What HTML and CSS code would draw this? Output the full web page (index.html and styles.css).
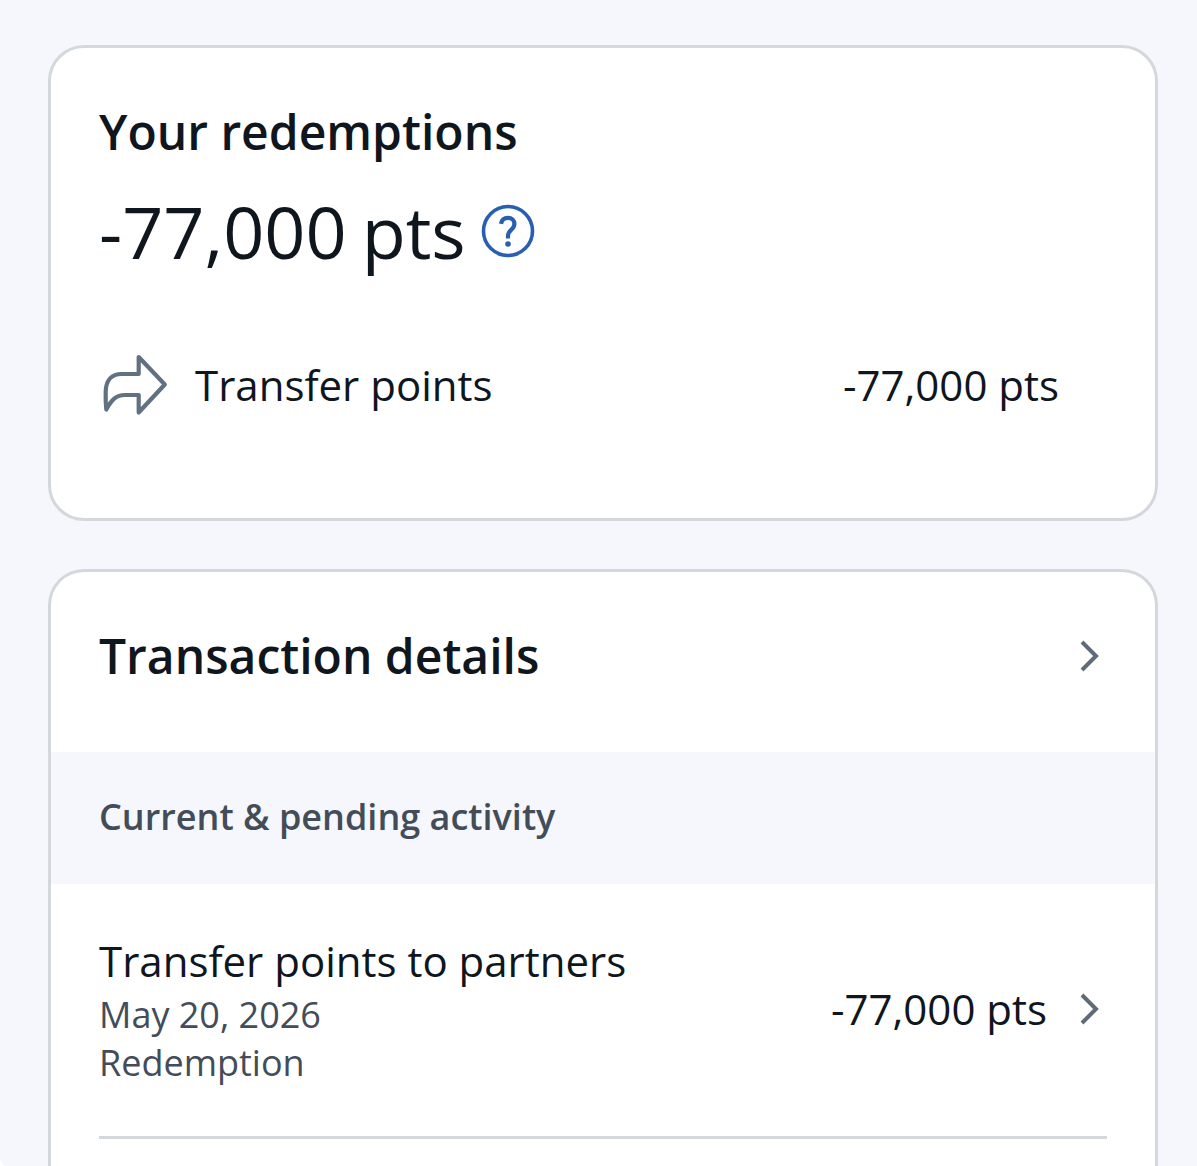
FILE: index.html
```html
<!DOCTYPE html>
<html lang="en">
<head>
<meta charset="utf-8">
<meta name="viewport" content="width=device-width, initial-scale=1">
<title>Your redemptions</title>
<link rel="stylesheet" href="styles.css">
</head>
<body>
<main class="page">
  <section class="card summary">
    <h2 class="card-title">Your redemptions</h2>
    <div class="total">
      <span class="total-value">-77,000</span>
      <span class="total-value">pts</span>
      <button class="help" type="button" aria-label="About your redemptions">
        <svg class="help-icon" viewBox="0 0 54 54" aria-hidden="true">
          <circle cx="27" cy="27" r="24.500" fill="none" stroke="currentColor" stroke-width="3.600"/>
          <path d="M20 19.800C20.600 16 23.300 13.800 27 13.800c3.800 0 6.400 2.600 6.400 6.200 0 5.600-6.400 5.800-6.400 11.800v2.600" fill="none" stroke="currentColor" stroke-width="4.200"/>
          <circle cx="27" cy="40" r="2.800" fill="currentColor"/>
        </svg>
      </button>
    </div>
    <div class="breakdown">
      <svg class="share-icon" viewBox="0 0 72 72" aria-hidden="true">
        <path d="M39.700 8 65.800 35.500 39.700 63.500V46H26C17 46 12.500 51 7.300 60.500 6.700 55 6.500 49 6.700 42.500 7 31 13 25 22.500 25h17.200z" fill="none" stroke="currentColor" stroke-width="4.200" stroke-linejoin="round"/>
      </svg>
      <span class="breakdown-label">Transfer points</span>
      <span class="amount">-77,000 pts</span>
    </div>
  </section>

  <section class="card details">
    <a class="details-header" href="#transactions">
      <h2 class="card-title">Transaction details</h2>
      <svg class="chevron" viewBox="0 0 36 36" aria-hidden="true"><path d="M11 4 25 18 11 32"/></svg>
    </a>
    <h3 class="group-title">Current &amp; pending activity</h3>
    <ul class="activity">
      <li class="activity-item">
        <a class="activity-link" href="#transfer">
          <span class="activity-text">
            <span class="activity-name">Transfer points to partners</span>
            <span class="activity-meta">May 20, 2026</span>
            <span class="activity-meta">Redemption</span>
          </span>
          <span class="amount">-77,000 pts</span>
          <svg class="chevron" viewBox="0 0 36 36" aria-hidden="true"><path d="M11 4 25 18 11 32"/></svg>
        </a>
      </li>
    </ul>
  </section>
</main>
</body>
</html>
```
FILE: styles.css
```css
* {
  box-sizing: border-box;
}

html {
  background: #fff;
}

body {
  margin: 0;
  font-family: "Open Sans", "Noto Sans", sans-serif;
  color: #10161d;
}

h2,
h3,
ul {
  margin: 0;
  padding: 0;
}

a {
  color: inherit;
  text-decoration: none;
}

.page {
  display: flex;
  flex-direction: column;
  gap: 48px;
  min-height: 100vh;
  padding: 45px 39px 0 48px;
  background: #f5f7fc;
  border-bottom-left-radius: 8px;
}

.card {
  background: #fff;
  border: 3px solid #d4d8dc;
  border-radius: 36px;
}

.card-title {
  font-size: 48px;
  font-weight: 600;
  line-height: 72px;
}

.summary {
  padding: 48px 48px 97px;
}

.total {
  display: flex;
  align-items: center;
  gap: 15px;
  margin-top: 14px;
}

.total-value {
  font-size: 72px;
  line-height: 98px;
}

.help {
  display: flex;
  padding: 0;
  border: 0;
  background: none;
  color: #285fb0;
}

.help-icon {
  width: 54px;
  height: 54px;
}

.breakdown {
  display: flex;
  align-items: center;
  gap: 24px;
  margin-top: 69px;
  padding-right: 48px;
}

.share-icon {
  flex: none;
  width: 72px;
  height: 72px;
  color: #627181;
}

.breakdown-label {
  flex: 1;
  font-size: 42px;
  line-height: 60px;
}

.amount {
  font-size: 42px;
  line-height: 60px;
  white-space: nowrap;
}

.details {
  flex: 1;
  border-bottom: 0;
  border-radius: 36px 36px 0 0;
}

.details-header {
  display: flex;
  align-items: center;
  justify-content: space-between;
  padding: 48px 48px 60px;
}

.chevron {
  flex: none;
  width: 36px;
  height: 36px;
  fill: none;
  stroke: #5f6b78;
  stroke-width: 4;
}

.group-title {
  padding: 38px 48px 40px;
  background: #f5f7fc;
  color: #434c59;
  font-size: 36px;
  font-weight: 600;
  line-height: 54px;
}

.activity {
  padding: 0 48px;
  list-style: none;
}

.activity-item {
  padding: 47px 0 49px;
  border-bottom: 3px solid #d4d8dc;
}

.activity-link {
  display: flex;
  align-items: center;
  gap: 24px;
}

.activity-text {
  display: flex;
  flex: 1;
  flex-direction: column;
}

.activity-name {
  font-size: 42px;
  line-height: 60px;
}

.activity-meta {
  color: #434c59;
  font-size: 36px;
  line-height: 48px;
}
```
